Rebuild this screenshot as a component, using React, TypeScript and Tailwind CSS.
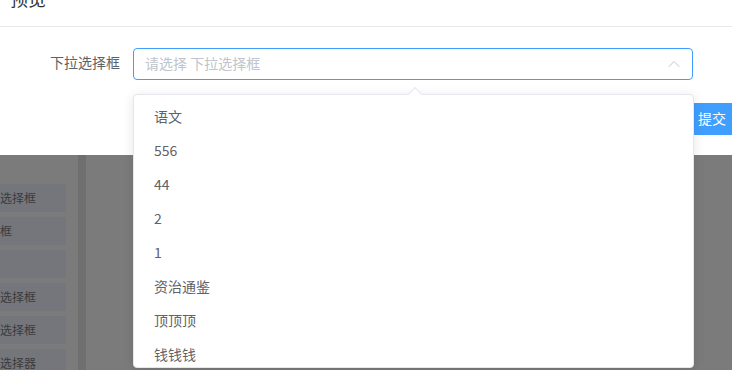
import { ChevronUp } from "lucide-react";

const options = ["语文", "556", "44", "2", "1", "资治通鉴", "顶顶顶", "钱钱钱", "test"];
const sideItems = ["下拉选择框", "文本框", "开关", "多选选择框", "单选选择框", "时间选择器"];

const App = () => {
  return (
    <div
      className="relative w-[732px] h-[370px] overflow-hidden bg-[#7b7b7b] text-[14px] text-[#606266]"
      style={{ fontFamily: '"Noto Sans CJK SC", "Noto Sans", sans-serif' }}
    >
      {/* Dialog */}
      <div className="h-[155px] bg-white flex flex-col">
        <div className="-mt-[16px] pt-[2px] pb-[16px] px-[10px] border-b border-[#e8e8e8]">
          <span className="block leading-[24px] text-[18px] text-[#303133]">预览</span>
        </div>
        <div className="flex items-center mt-[21px] h-[32px]">
          <label className="w-[120px] text-right pb-[3px]">下拉选择框</label>
          <div className="ml-[13px] w-[560px] h-[32px] flex items-center justify-between border border-[#409eff] rounded-[4px] pl-[11px] pr-[8px]">
            <span className="text-[#c0c4cc] pb-[2px]">请选择 下拉选择框</span>
            <ChevronUp size={20} strokeWidth={1.2} className="text-[#c0c4cc]" />
          </div>
        </div>
        <div className="flex pl-[678px] mt-[23px]">
          <button className="h-[32px] px-[20px] pb-[1px] shrink-0 bg-[#409eff] text-white rounded-[4px] whitespace-nowrap">
            提交
          </button>
        </div>
      </div>

      {/* Page behind mask */}
      <div className="flex h-[215px]">
        <div className="w-[66px] pt-[29px] flex flex-col gap-[5px] overflow-hidden">
          {sideItems.map((t) => (
            <div key={t} className="h-[28px] shrink-0 bg-[#75767b] flex items-center text-[12px] text-[#3a3b3e] whitespace-nowrap">
              <span className="-ml-[24px]">{t}</span>
            </div>
          ))}
        </div>
        <div className="ml-[12px] w-[8px] bg-[#6f6f6f]" />
      </div>

      {/* Dropdown */}
      <div className="absolute left-[133px] top-[94px] w-[561px] h-[274px] overflow-visible bg-white border border-[#e4e7ed] rounded-[4px] shadow-[0_2px_12px_rgba(0,0,0,0.1)]">
        <div className="absolute -top-[6px] left-[276px] w-[10px] h-[10px] rotate-45 bg-white border-l border-t border-[#e4e7ed]" />
        <ul className="relative pt-[4px] h-full overflow-hidden">
          {options.map((o) => (
            <li key={o} className="h-[34px] leading-[34px] px-[20px] text-[#606266]">
              {o}
            </li>
          ))}
        </ul>
      </div>
    </div>
  );
};

export default App;
